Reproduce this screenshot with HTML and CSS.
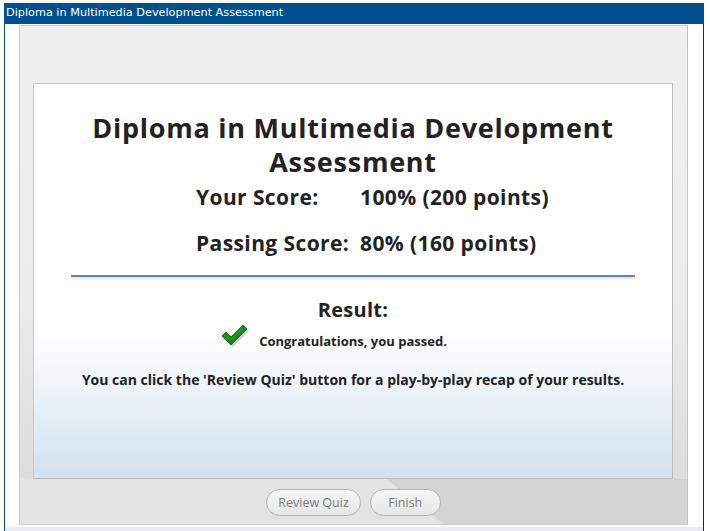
FILE: index.html
```html
<!doctype html>
<html>

<head>
    <meta charset="utf-8" />
    <link rel="stylesheet" href="styles.css">
</head>

<body>

    <div class="window">
        <div class="titlebar">Diploma in Multimedia Development Assessment</div>
        <div class="frame">
            <div class="panel">
                <div class="card">
                    <div class="title">Diploma in Multimedia Development Assessment</div>
                    <div class="scores">
                        <span class="label">Your Score:</span>
                        <span class="value">100% (200 points)</span>
                        <span class="label">Passing Score:</span>
                        <span class="value">80% (160 points)</span>
                    </div>
                    <div class="rule"></div>
                    <div class="result">Result:</div>
                    <div class="passed">
                        <svg class="check" width="28" height="24" viewBox="0 0 28 24">
                            <polygon points="2,13 6,9 11,14 23,2 27,6 11,22" fill="#bdbdbd" opacity="0.7" />
                            <polygon points="0,11 4,7 9,12 21,0 25,4 9,20" fill="#168416" stroke="#0b5e0b" stroke-width="0.8" />
                            <polygon points="1.5,11 4,8.5 9,13.5 21,1.5 22.5,3 9,16.5" fill="#3aa83a" opacity="0.5" />
                        </svg>
                        <span>Congratulations, you passed.</span>
                    </div>
                    <div class="review">You can click the 'Review Quiz' button for a play-by-play recap of your results.</div>
                </div>
                <div class="footer">
                    <button class="btn">Review Quiz</button>
                    <button class="btn">Finish</button>
                </div>
            </div>
        </div>
        <div class="strip"></div>
    </div>

</body>

</html>
```

FILE: styles.css
```css
html,
body {
    margin: 0 0;
    height: 100%;
    background-color: white;
    font-family: "Open Sans", Arial, sans-serif;
}

.window {
    margin: 3px 6px 0 4px;
    height: 528px;
    display: flex;
    flex-direction: column;
    border-left: 1px solid #00508e;
    border-right: 1px solid #0b2c5c;
}

.window .titlebar {
    height: 21px;
    line-height: 20px;
    margin-left: -1px;
    margin-right: -1px;
    padding-left: 2px;
    background-color: #00508e;
    color: white;
    font-family: "DejaVu Sans", Verdana, sans-serif;
    font-size: 11.25px;
}

.window .frame {
    flex-grow: 1;
    display: flex;
    padding: 1px 15px 2px 14px;
    background-color: white;
}

.window .strip {
    height: 4px;
    background-color: #e8ecf2;
}

.panel {
    flex-grow: 1;
    display: flex;
    flex-direction: column;
    padding: 57px 14px 0 13px;
    border: 1px solid #cfcfcf;
    border-right-color: #c4c4c4;
    background: linear-gradient(to bottom, #f0f0f0 0%, #ececec 55%, #d9d9d9 100%);
}

.panel .card {
    height: 394px;
    border: 1px solid #c8c8c8;
    border-right-color: #bbbbbb;
    border-bottom-color: #bbbbbb;
    background: linear-gradient(to bottom, #ffffff 0%, #ffffff 62%, #d2e1ef 100%);
    display: flex;
    flex-direction: column;
    align-items: center;
    color: #222;
}

.card .title {
    margin-top: 27px;
    width: 580px;
    text-align: center;
    font-size: 27px;
    letter-spacing: 0.75px;
    font-weight: bold;
    line-height: 34px;
}

.card .scores {
    align-self: flex-start;
    margin-left: 162px;
    margin-top: 4px;
    display: grid;
    grid-template-columns: 164px auto;
    row-gap: 18px;
    font-size: 21px;
    letter-spacing: 0.4px;
    font-weight: bold;
    line-height: 28px;
}

.card .rule {
    margin-top: 18px;
    width: 564px;
    height: 2px;
    background-color: #5b83bf;
    box-shadow: 0 2px 2px rgba(0, 0, 0, 0.12);
}

.card .result {
    margin-top: 19px;
    font-size: 20px;
    letter-spacing: 0.3px;
    font-weight: bold;
    line-height: 28px;
}

.card .passed {
    margin-top: 5px;
    display: flex;
    align-items: center;
    gap: 9px;
    margin-left: -37px;
    font-size: 13px;
    font-weight: bold;
    line-height: 24px;
}

.card .passed .check {
    margin-top: -9px;
}

.card .review {
    margin-top: 17px;
    font-size: 14px;
    font-weight: bold;
    line-height: 20px;
}

.panel .footer {
    flex-grow: 1;
    display: flex;
    justify-content: center;
    align-items: center;
    gap: 9px;
    margin: 0 -14px 0 -13px;
    padding-top: 1px;
    background: linear-gradient(38deg, #e3e3e3 0%, #e3e3e3 58.5%, #d4d4d4 58.5%, #d4d4d4 100%);
}

.footer .btn {
    height: 27px;
    min-width: 71px;
    padding: 0 11px;
    border: 1px solid #b4b4b4;
    border-radius: 14px;
    background: linear-gradient(to bottom, #f6f6f6, #e6e6e6);
    color: #7a7a7a;
    font-family: "Open Sans", Arial, sans-serif;
    font-size: 12.5px;
}
```
